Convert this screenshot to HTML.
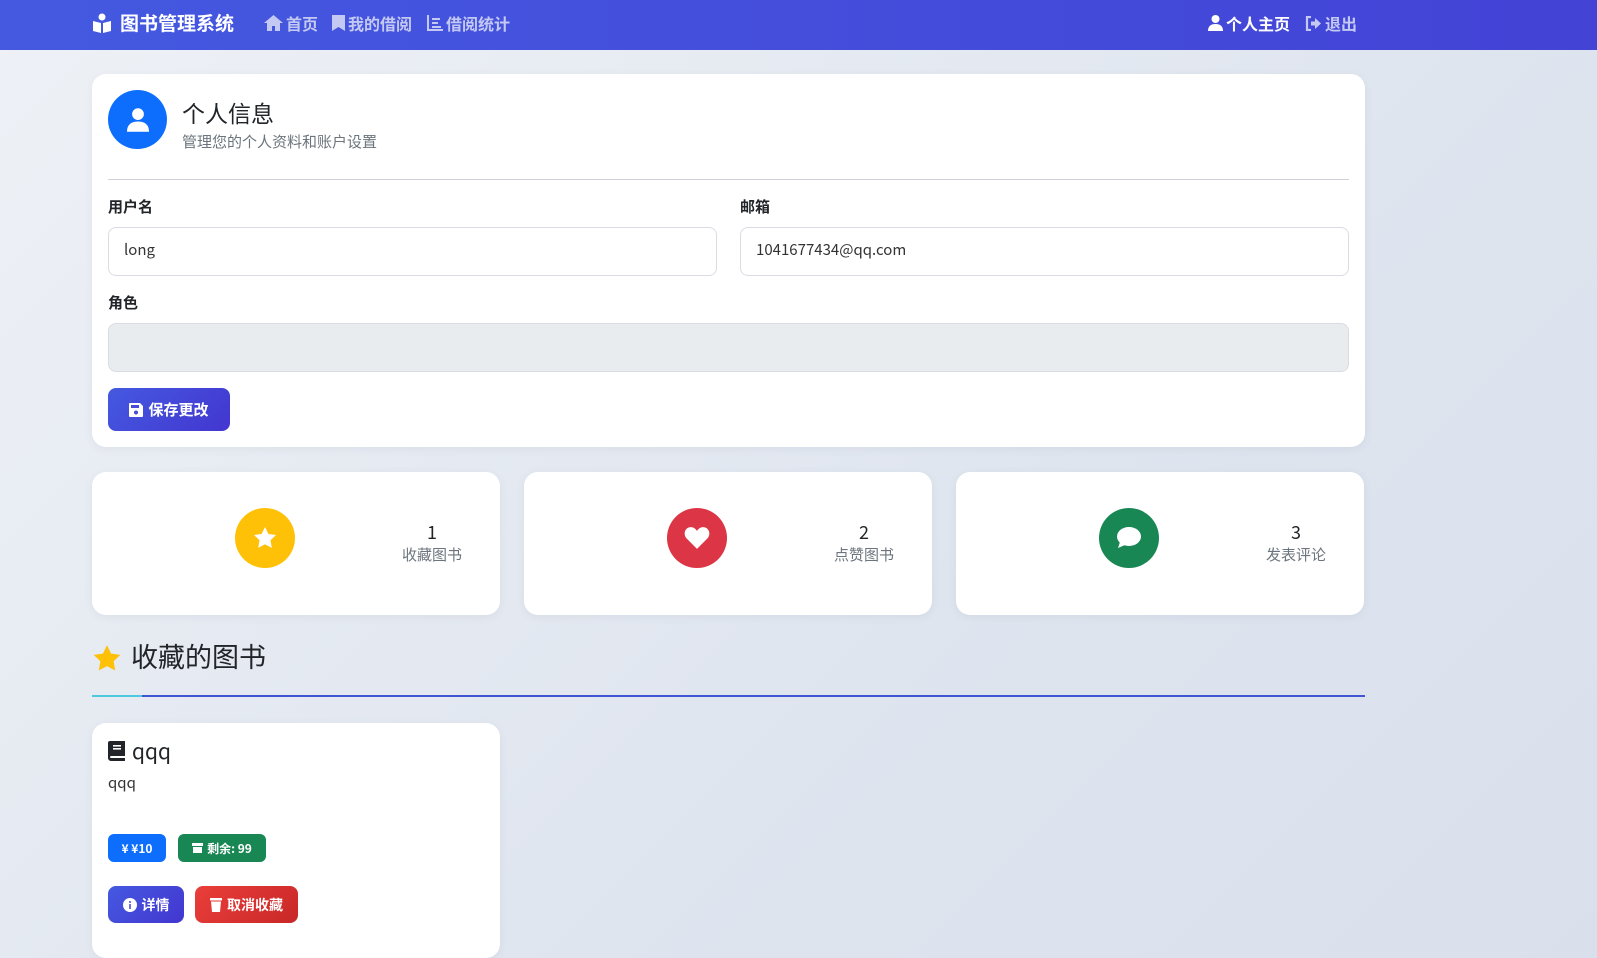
<!DOCTYPE html>
<html><head><meta charset="utf-8"><style>
*{box-sizing:border-box;margin:0;padding:0}
body{width:1597px;height:958px;overflow:hidden;font-family:"Noto Sans CJK SC","Liberation Sans",sans-serif;background:linear-gradient(135deg,#eef1f6 0%,#dfe5ef 60%,#d9e0ec 100%);position:relative;color:#212529}
.nav{position:absolute;left:0;top:0;width:1597px;height:50px;background:linear-gradient(90deg,#4459e0,#4343d6);color:#fff}
.nav .t{position:absolute;top:9px;font-size:19px;font-weight:bold}
.nav .l{position:absolute;top:11px;font-size:16px;font-weight:bold;color:#c4c9f3;display:flex;align-items:center;gap:3px}
.card{position:absolute;background:#fff;border-radius:14px;box-shadow:0 2px 10px rgba(0,0,0,.05)}
.lbl{position:absolute;font-size:15px;font-weight:bold}
.inp{position:absolute;height:49px;border:1px solid #d9dde3;border-radius:8px;font-size:15px;padding:11px 15px;color:#333}
.stat .c{position:absolute;left:143px;top:36px;width:60px;height:60px;border-radius:50%;display:flex;align-items:center;justify-content:center}
.stat .n{position:absolute;left:290px;top:47px;width:100px;text-align:center;font-size:18px}
.stat .s{position:absolute;left:290px;top:72px;width:100px;text-align:center;font-size:15px;color:#6c757d}
.badge{position:absolute;height:28px;border-radius:6px;color:#fff;font-size:12px;font-weight:bold;display:flex;align-items:center;justify-content:center;gap:4px}
.btn{position:absolute;height:37px;border-radius:8px;color:#fff;font-size:15px;font-weight:bold;display:flex;align-items:center;justify-content:center;gap:5px}
</style></head><body>
<div class="nav">
 <svg style="position:absolute;left:92px;top:13px" width="20" height="20" viewBox="0 0 20 20" fill="#fff"><circle cx="10" cy="4" r="3.5"/><path d="M1 8l8 2v10L1 18zM19 8l-8 2v10l8-2z"/></svg>
 <div class="t" style="left:120px">图书管理系统</div>
 <div class="l" style="left:264px"><svg width="19" height="16" viewBox="0 0 19 16" fill="#c4c9f3"><path d="M9.5 0L0 8h3v8h5v-5h3v5h5V8h3z"/></svg>首页</div>
 <div class="l" style="left:332px"><svg width="13" height="16" viewBox="0 0 13 16" fill="#c4c9f3"><path d="M0 0h13v16l-6.5-4L0 16z"/></svg>我的借阅</div>
 <div class="l" style="left:427px"><svg width="16" height="16" viewBox="0 0 16 16" fill="none" stroke="#c4c9f3" stroke-width="2"><path d="M1 0v15h15M5 4h8M5 8h6M5 12h9"/></svg>借阅统计</div>
 <div class="l" style="left:1208px;color:#fff"><svg width="15" height="16" viewBox="0 0 15 16" fill="#fff"><circle cx="7.5" cy="4" r="4"/><path d="M0 16c0-5 3-7 7.5-7S15 11 15 16z"/></svg>个人主页</div>
 <div class="l" style="left:1305px"><svg width="17" height="15" viewBox="0 0 17 15"><path d="M6 1H2v13h4" fill="none" stroke="#c4c9f3" stroke-width="2.2"/><path d="M6 5.5h4V2l6 5.5-6 5.5V9.5H6z" fill="#c4c9f3"/></svg>退出</div>
</div>

<div class="card" style="left:92px;top:74px;width:1273px;height:373px">
 <div style="position:absolute;left:16px;top:16px;width:59px;height:59px;border-radius:50%;background:#0d6efd;display:flex;align-items:center;justify-content:center"><svg width="22" height="24" viewBox="0 0 15 16" fill="#fff"><circle cx="7.5" cy="4" r="4"/><path d="M0 16c0-5 3-7 7.5-7S15 11 15 16z"/></svg></div>
 <div style="position:absolute;left:90px;top:21px;font-size:23px">个人信息</div>
 <div style="position:absolute;left:90px;top:57px;font-size:15px;color:#6c757d">管理您的个人资料和账户设置</div>
 <div style="position:absolute;left:16px;top:105px;width:1241px;height:1px;background:#cfd3d8"></div>
 <div class="lbl" style="left:16px;top:122px">用户名</div>
 <div class="lbl" style="left:648px;top:122px">邮箱</div>
 <div class="inp" style="left:16px;top:153px;width:609px">long</div>
 <div class="inp" style="left:648px;top:153px;width:609px">1041677434@qq.com</div>
 <div class="lbl" style="left:16px;top:218px">角色</div>
 <div class="inp" style="left:16px;top:249px;width:1241px;background:#e9ecef"></div>
 <div class="btn" style="left:16px;top:314px;width:122px;height:43px;background:linear-gradient(135deg,#4459e0,#4336d0)"><svg width="14" height="14" viewBox="0 0 14 14" fill="#fff"><path d="M0 1a1 1 0 011-1h10l3 3v10a1 1 0 01-1 1H1a1 1 0 01-1-1z"/><rect x="2" y="2" width="8" height="3" fill="#4a4ad8"/><circle cx="7" cy="9.5" r="2" fill="#4a4ad8"/></svg>保存更改</div>
</div>

<div class="card stat" style="left:92px;top:472px;width:408px;height:143px"><div class="c" style="background:#ffc107"><svg width="24" height="24" viewBox="0 0 24 24" fill="#fff"><path d="M12 1l3.4 7 7.6 1-5.5 5.3 1.3 7.6L12 18.3 5.2 21.9l1.3-7.6L1 9l7.6-1z"/></svg></div><div class="n">1</div><div class="s">收藏图书</div></div>
<div class="card stat" style="left:524px;top:472px;width:408px;height:143px"><div class="c" style="background:#dc3545"><svg width="26" height="24" viewBox="0 0 24 22" fill="#fff"><path d="M12 21L2 11C-1 7 1 1 6.5 1 9 1 11 3 12 4.5 13 3 15 1 17.5 1 23 1 25 7 22 11z"/></svg></div><div class="n">2</div><div class="s">点赞图书</div></div>
<div class="card stat" style="left:956px;top:472px;width:408px;height:143px"><div class="c" style="background:#198754"><svg width="26" height="24" viewBox="0 0 26 24" fill="#fff"><ellipse cx="13" cy="10.5" rx="12" ry="9.5"/><path d="M4 16l-2 6 7-3z"/></svg></div><div class="n">3</div><div class="s">发表评论</div></div>

<svg style="position:absolute;left:92px;top:644px" width="30" height="29" viewBox="0 0 24 24" fill="#ffc107"><path d="M12 1l3.4 7 7.6 1-5.5 5.3 1.3 7.6L12 18.3 5.2 21.9l1.3-7.6L1 9l7.6-1z"/></svg>
<div style="position:absolute;left:131px;top:636px;font-size:27px">收藏的图书</div>
<div style="position:absolute;left:92px;top:695px;width:1273px;height:2px;background:#3f55d6"></div>
<div style="position:absolute;left:92px;top:695px;width:50px;height:2px;background:#4dc9de"></div>

<div class="card" style="left:92px;top:723px;width:408px;height:235px">
 <svg style="position:absolute;left:16px;top:18px" width="17" height="20" viewBox="0 0 17 20" fill="#212529"><path d="M2 0h15v15H3a1 1 0 000 2h14v3H3a3 3 0 01-3-3V2a2 2 0 012-2z"/><rect x="5" y="4" width="8" height="1.6" fill="#fff"/><rect x="5" y="7" width="8" height="1.6" fill="#fff"/></svg>
 <div style="position:absolute;left:40px;top:13px;font-size:21px">qqq</div>
 <div style="position:absolute;left:16px;top:49px;font-size:15px;color:#333">qqq</div>
 <div class="badge" style="left:16px;top:111px;width:58px;background:#0d6efd">¥ ¥10</div>
 <div class="badge" style="left:86px;top:111px;width:88px;background:#198754"><svg width="11" height="10" viewBox="0 0 11 10" fill="#fff"><rect width="11" height="3"/><rect x="1" y="4" width="9" height="6"/></svg>剩余: 99</div>
 <div class="btn" style="left:16px;top:163px;width:76px;background:linear-gradient(135deg,#4459e0,#4336d0);font-size:14px"><svg width="14" height="14" viewBox="0 0 14 14"><circle cx="7" cy="7" r="7" fill="#fff"/><rect x="6.2" y="6" width="1.6" height="5" fill="#4a4ad8"/><circle cx="7" cy="4" r="1" fill="#4a4ad8"/></svg>详情</div>
 <div class="btn" style="left:103px;top:163px;width:103px;background:linear-gradient(135deg,#ea3e3a,#c82828);font-size:14px"><svg width="12" height="14" viewBox="0 0 12 14" fill="#fff"><rect width="12" height="2.5"/><path d="M1 3.5h10l-1 10.5H2z"/></svg>取消收藏</div>
</div>
</body></html>
